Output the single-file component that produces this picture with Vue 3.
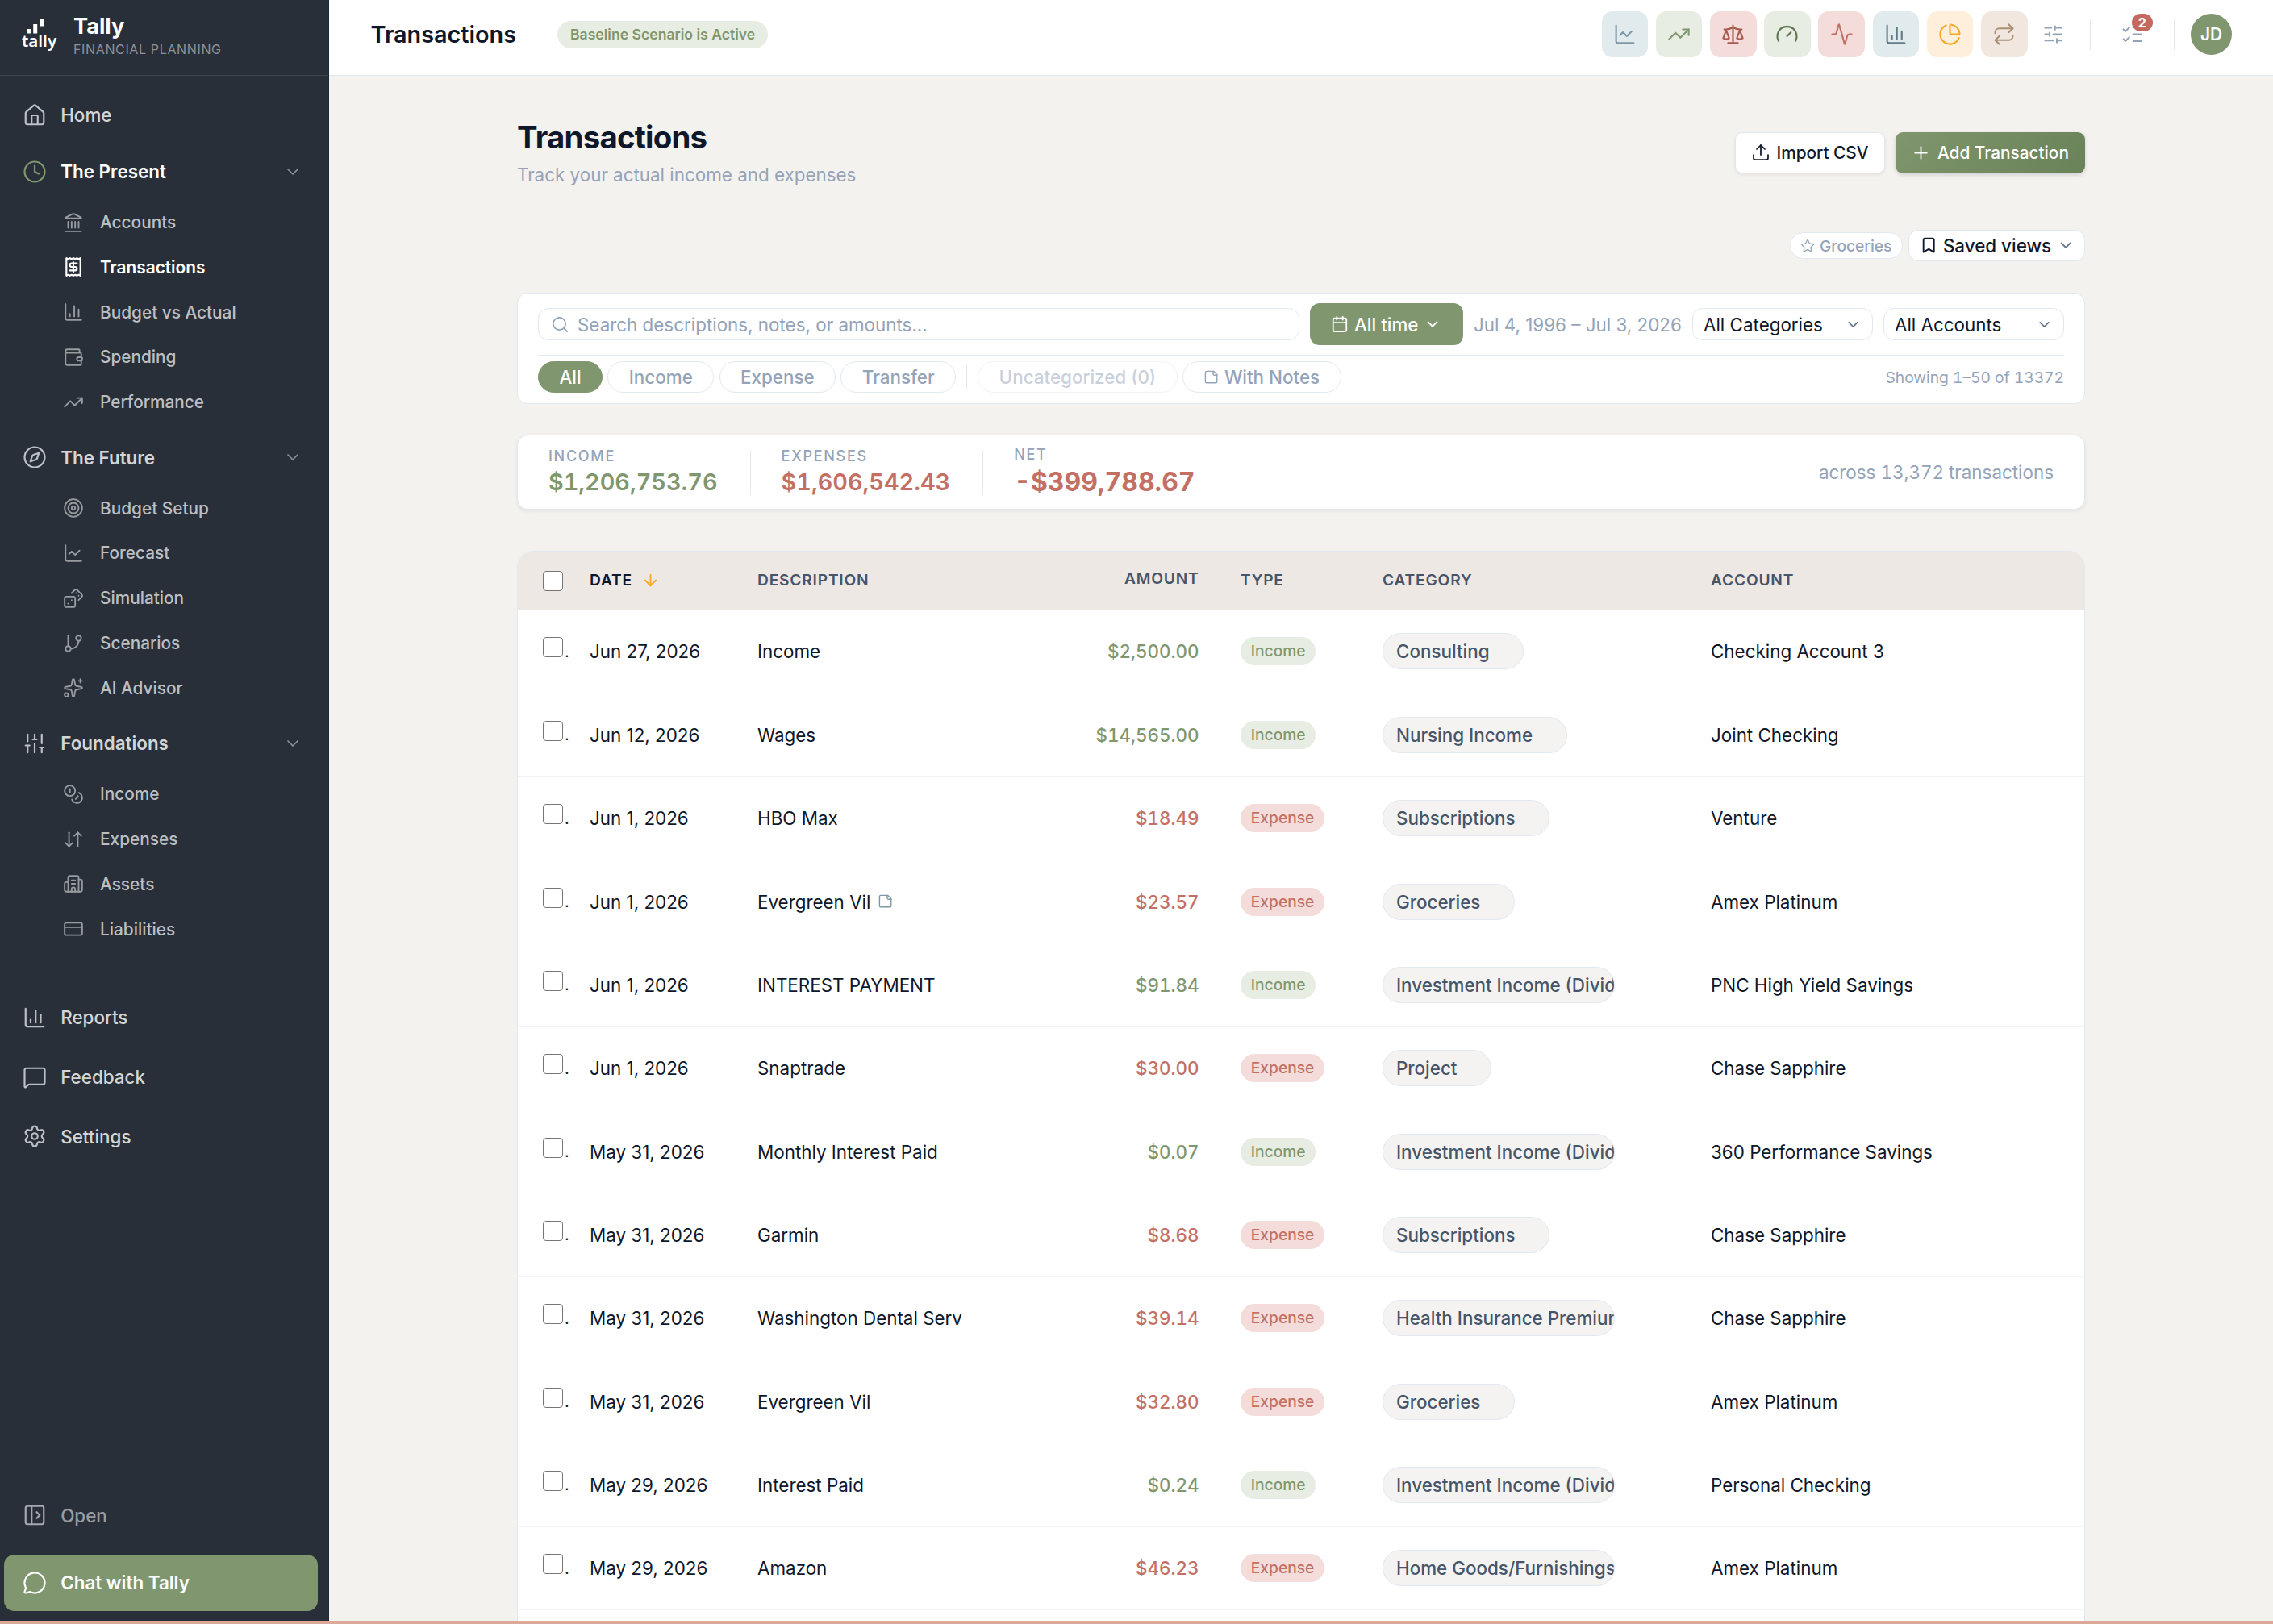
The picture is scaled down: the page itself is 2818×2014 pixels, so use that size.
<template>
  <div class="app">
    <aside class="sidebar">
      <div class="brand">
        <svg class="brand-logo" viewBox="0 0 44 42">
          <rect x="6.3" y="14" width="5" height="5.5" fill="#fff" />
          <rect x="14.2" y="8" width="5" height="11.5" fill="#fff" />
          <rect x="22.2" y="1" width="5" height="9.5" fill="#fff" />
          <text x="0" y="35.5" class="brand-word">tally</text>
        </svg>
        <div class="brand-text">
          <div class="brand-name">Tally</div>
          <div class="brand-sub">FINANCIAL PLANNING</div>
        </div>
      </div>

      <nav class="nav">
        <a class="nav-top nav-home">
          <svg class="icon" viewBox="0 0 24 24" v-html="icons.house"></svg>
          <span>Home</span>
        </a>
        <section v-for="group in navGroups" :key="group.label" class="nav-group">
          <div class="nav-top nav-heading" :class="{ current: group.current }">
            <svg class="icon" viewBox="0 0 24 24" v-html="icons[group.icon]"></svg>
            <span>{{ group.label }}</span>
            <svg class="icon nav-chevron" viewBox="0 0 24 24" v-html="icons.chevronDown"></svg>
          </div>
          <div class="nav-children">
            <a v-for="item in group.items" :key="item.label" class="nav-child" :class="{ active: item.active }">
              <svg class="icon" viewBox="0 0 24 24" v-html="icons[item.icon]"></svg>
              <span>{{ item.label }}</span>
            </a>
          </div>
        </section>
        <div class="nav-divider"></div>
        <a v-for="item in navExtra" :key="item.label" class="nav-top nav-extra">
          <svg class="icon" viewBox="0 0 24 24" v-html="icons[item.icon]"></svg>
          <span>{{ item.label }}</span>
        </a>
      </nav>

      <div class="sidebar-footer">
        <a class="nav-top nav-open">
          <svg class="icon" viewBox="0 0 24 24" v-html="icons.panelOpen"></svg>
          <span>Open</span>
        </a>
        <button class="chat-btn">
          <svg class="icon" viewBox="0 0 24 24" v-html="icons.messageCircle"></svg>
          <span>Chat with Tally</span>
        </button>
      </div>
    </aside>

    <div class="main">
      <header class="topbar">
        <div class="topbar-title">Transactions</div>
        <span class="scenario">Baseline Scenario is Active</span>
        <div class="tools">
          <button v-for="tool in tools" :key="tool.icon" class="tool" :class="tool.tone">
            <svg class="icon" viewBox="0 0 24 24" v-html="icons[tool.icon]"></svg>
          </button>
        </div>
        <svg class="icon customize" viewBox="0 0 24 24" v-html="icons.slidersH"></svg>
        <span class="bar-sep"></span>
        <div class="tasks">
          <svg class="icon" viewBox="0 0 24 24" v-html="icons.listChecks"></svg>
          <span class="tasks-badge">2</span>
        </div>
        <span class="bar-sep"></span>
        <div class="avatar">JD</div>
      </header>

      <main class="content">
        <div class="page-head">
          <div>
            <h1>Transactions</h1>
            <p>Track your actual income and expenses</p>
          </div>
          <div class="page-actions">
            <button class="btn btn-light">
              <svg class="icon" viewBox="0 0 24 24" v-html="icons.upload"></svg>Import CSV
            </button>
            <button class="btn btn-green">
              <svg class="icon" viewBox="0 0 24 24" v-html="icons.plus"></svg>Add Transaction
            </button>
          </div>
        </div>

        <div class="views">
          <span class="view-chip">
            <svg class="icon" viewBox="0 0 24 24" v-html="icons.star"></svg>Groceries
          </span>
          <button class="saved">
            <svg class="icon" viewBox="0 0 24 24" v-html="icons.bookmark"></svg>
            <span>Saved views</span>
            <svg class="icon saved-chevron" viewBox="0 0 24 24" v-html="icons.chevronDown"></svg>
          </button>
        </div>

        <div class="card filters">
          <div class="filter-row">
            <div class="search">
              <svg class="icon" viewBox="0 0 24 24" v-html="icons.search"></svg>
              <span>Search descriptions, notes, or amounts...</span>
            </div>
            <button class="range">
              <svg class="icon" viewBox="0 0 24 24" v-html="icons.calendar"></svg>
              <span>All time</span>
              <svg class="icon range-chevron" viewBox="0 0 24 24" v-html="icons.chevronDown"></svg>
            </button>
            <span class="range-text">Jul 4, 1996 – Jul 3, 2026</span>
            <div v-for="label in ['All Categories', 'All Accounts']" :key="label" class="select">
              <span>{{ label }}</span>
              <svg class="icon" viewBox="0 0 24 24" v-html="icons.chevronDown"></svg>
            </div>
          </div>
          <div class="pill-row">
            <button class="pill on">All</button>
            <button class="pill">Income</button>
            <button class="pill">Expense</button>
            <button class="pill">Transfer</button>
            <span class="pill-sep"></span>
            <button class="pill disabled">Uncategorized (0)</button>
            <button class="pill">
              <svg class="icon" viewBox="0 0 24 24" v-html="icons.note"></svg>With Notes
            </button>
            <span class="showing">Showing 1–50 of 13372</span>
          </div>
        </div>

        <div class="card totals">
          <div class="total">
            <span class="total-label">INCOME</span>
            <span class="total-value green">$1,206,753.76</span>
          </div>
          <div class="total">
            <span class="total-label">EXPENSES</span>
            <span class="total-value red">$1,606,542.43</span>
          </div>
          <div class="total">
            <span class="total-label">NET</span>
            <span class="total-value net red">-$399,788.67</span>
          </div>
          <span class="across">across 13,372 transactions</span>
        </div>

        <div class="table">
          <div class="row head">
            <span class="box head-box"></span>
            <span class="sorted">DATE<svg class="icon" viewBox="0 0 24 24" v-html="icons.arrowDown"></svg></span>
            <span>DESCRIPTION</span>
            <span class="amount">AMOUNT</span>
            <span class="col-type">TYPE</span>
            <span>CATEGORY</span>
            <span>ACCOUNT</span>
          </div>
          <div v-for="(t, i) in transactions" :key="i" class="row">
            <span class="check"><span class="box"></span><span class="dot">.</span></span>
            <span>{{ t.date }}</span>
            <span class="desc">
              {{ t.description }}<svg v-if="t.note" class="icon" viewBox="0 0 24 24" v-html="icons.note"></svg>
            </span>
            <span class="amount" :class="t.type === 'Income' ? 'green' : 'red'">{{ t.amount }}</span>
            <span class="col-type"><span class="type" :class="t.type.toLowerCase()">{{ t.type }}</span></span>
            <span class="col-cat"><span class="category">{{ t.category }}</span></span>
            <span>{{ t.account }}</span>
          </div>
        </div>
      </main>
    </div>

    <div class="bottom-strip"></div>
  </div>
</template>

<script setup>
const p = (...ds) => ds.map((d) => `<path d="${d}"/>`).join('')
const c = (x, y, r) => `<circle cx="${x}" cy="${y}" r="${r}"/>`
const r = (x, y, w, h) => `<rect x="${x}" y="${y}" width="${w}" height="${h}" rx="2"/>`

// 24x24 stroke icons
const icons = {
  house: p('M15 21v-8a1 1 0 0 0-1-1h-4a1 1 0 0 0-1 1v8', 'M3 10a2 2 0 0 1 .709-1.528l7-5.999a2 2 0 0 1 2.582 0l7 5.999A2 2 0 0 1 21 10v9a2 2 0 0 1-2 2H5a2 2 0 0 1-2-2z'),
  clock: c(12, 12, 10) + p('M12 6v6l4 2'),
  compass: c(12, 12, 10) + p('m16.24 7.76-1.804 5.411a2 2 0 0 1-1.265 1.265L7.76 16.24l1.804-5.411a2 2 0 0 1 1.265-1.265z'),
  slidersV: p('M10 8h4', 'M12 21v-9', 'M12 8V3', 'M17 16h4', 'M19 12V3', 'M19 21v-5', 'M3 14h4', 'M5 10V3', 'M5 21v-7'),
  slidersH: p('M10 5H3', 'M12 19H3', 'M14 3v4', 'M16 17v4', 'M21 12h-9', 'M21 19h-5', 'M21 5h-7', 'M8 10v4', 'M8 12H3'),
  chevronDown: p('m6 9 6 6 6-6'),
  landmark: p('M10 18v-7', 'M11.12 2.198a2 2 0 0 1 1.76.006l7.866 3.847c.476.233.31.949-.22.949H3.474c-.53 0-.695-.716-.22-.949z', 'M14 18v-7', 'M18 18v-7', 'M3 22h18', 'M6 18v-7'),
  receipt: p('M4 2v20l2-1 2 1 2-1 2 1 2-1 2 1 2-1 2 1V2l-2 1-2-1-2 1-2-1-2 1-2-1-2 1Z', 'M16 8h-6a2 2 0 1 0 0 4h4a2 2 0 1 1 0 4H8', 'M12 17.5v-11'),
  chartColumn: p('M3 3v16a2 2 0 0 0 2 2h16', 'M18 17V9', 'M13 17V5', 'M8 17v-3'),
  chartLine: p('M3 3v16a2 2 0 0 0 2 2h16', 'm19 9-5 5-4-4-3 3'),
  wallet: p('M19 7V4a1 1 0 0 0-1-1H5a2 2 0 0 0 0 4h15a1 1 0 0 1 1 1v4h-3a2 2 0 0 0 0 4h3a1 1 0 0 0 1-1v-2a1 1 0 0 0-1-1', 'M3 5v14a2 2 0 0 0 2 2h15a1 1 0 0 0 1-1v-4'),
  trendingUp: p('m22 7-8.5 8.5-5-5L2 17', 'M16 7h6v6'),
  target: c(12, 12, 10) + c(12, 12, 6) + c(12, 12, 2),
  dices: r(2, 10, 12, 12) + p('m17.92 14 3.5-3.5a2.24 2.24 0 0 0 0-3l-5-4.92a2.24 2.24 0 0 0-3 0L10 6', 'M6 18h.01', 'M10 14h.01', 'M15 6h.01', 'M18 9h.01'),
  branch: p('M6 3v12') + c(18, 6, 3) + c(6, 18, 3) + p('M18 9a9 9 0 0 1-9 9'),
  sparkles: p('M11.017 2.814a1 1 0 0 1 1.966 0l1.051 5.558a2 2 0 0 0 1.594 1.594l5.558 1.051a1 1 0 0 1 0 1.966l-5.558 1.051a2 2 0 0 0-1.594 1.594l-1.051 5.558a1 1 0 0 1-1.966 0l-1.051-5.558a2 2 0 0 0-1.594-1.594l-5.558-1.051a1 1 0 0 1 0-1.966l5.558-1.051a2 2 0 0 0 1.594-1.594z', 'M20 2v4', 'M22 4h-4') + c(4, 20, 2),
  coins: c(8, 8, 6) + p('M18.09 10.37A6 6 0 1 1 10.34 18', 'M7 6h1v4', 'm16.71 13.88.7.71-2.82 2.82'),
  arrowDownUp: p('m3 16 4 4 4-4', 'M7 20V4', 'm21 8-4-4-4 4', 'M17 4v16'),
  building: p('M10 12h4', 'M10 8h4', 'M14 21v-3a2 2 0 0 0-4 0v3', 'M6 10H4a2 2 0 0 0-2 2v7a2 2 0 0 0 2 2h16a2 2 0 0 0 2-2V9a2 2 0 0 0-2-2h-2', 'M6 21V5a2 2 0 0 1 2-2h8a2 2 0 0 1 2 2v16'),
  card: r(2, 5, 20, 14) + p('M2 10h20'),
  message: p('M22 17a2 2 0 0 1-2 2H6.828a2 2 0 0 0-1.414.586l-2.202 2.202A.71.71 0 0 1 2 21.286V5a2 2 0 0 1 2-2h16a2 2 0 0 1 2 2z'),
  messageCircle: p('M2.992 16.342a2 2 0 0 1 .094 1.167l-1.065 3.29a1 1 0 0 0 1.236 1.168l3.413-.998a2 2 0 0 1 1.099.092 10 10 0 1 0-4.777-4.719'),
  settings: p('M9.671 4.136a2.34 2.34 0 0 1 4.659 0 2.34 2.34 0 0 0 3.319 1.915 2.34 2.34 0 0 1 2.33 4.033 2.34 2.34 0 0 0 0 3.831 2.34 2.34 0 0 1-2.33 4.033 2.34 2.34 0 0 0-3.319 1.915 2.34 2.34 0 0 1-4.659 0 2.34 2.34 0 0 0-3.32-1.915 2.34 2.34 0 0 1-2.33-4.033 2.34 2.34 0 0 0 0-3.831A2.34 2.34 0 0 1 6.35 6.051a2.34 2.34 0 0 0 3.319-1.915') + c(12, 12, 3),
  panelOpen: r(3, 3, 18, 18) + p('M9 3v18', 'm14 9 3 3-3 3'),
  scale: p('m16 16 3-8 3 8c-.87.65-1.92 1-3 1s-2.13-.35-3-1Z', 'm2 16 3-8 3 8c-.87.65-1.92 1-3 1s-2.13-.35-3-1Z', 'M7 21h10', 'M12 3v18', 'M3 7h2c2 0 5-1 7-2 2 1 5 2 7 2h2'),
  gauge: p('m12 14 4-4', 'M3.34 19a10 10 0 1 1 17.32 0'),
  activity: p('M22 12h-2.48a2 2 0 0 0-1.93 1.46l-2.35 8.36a.25.25 0 0 1-.48 0L9.24 2.18a.25.25 0 0 0-.48 0l-2.35 8.36A2 2 0 0 1 4.49 12H2'),
  pie: p('M21 12c.552 0 1.005-.449.95-.998a10 10 0 0 0-8.953-8.951c-.55-.055-.998.398-.998.95v8a1 1 0 0 0 1 1z', 'M21.21 15.89A10 10 0 1 1 8 2.83'),
  repeat: p('m17 2 4 4-4 4', 'M3 11v-1a4 4 0 0 1 4-4h14', 'm7 22-4-4 4-4', 'M21 13v1a4 4 0 0 1-4 4H3'),
  listChecks: p('M13 5h8', 'M13 12h8', 'M13 19h8', 'm3 17 2 2 4-4', 'm3 7 2 2 4-4'),
  upload: p('M12 3v12', 'm17 8-5-5-5 5', 'M21 15v4a2 2 0 0 1-2 2H5a2 2 0 0 1-2-2v-4'),
  plus: p('M5 12h14', 'M12 5v14'),
  star: p('M11.525 2.295a.53.53 0 0 1 .95 0l2.31 4.679a2.123 2.123 0 0 0 1.595 1.16l5.166.756a.53.53 0 0 1 .294.904l-3.736 3.638a2.123 2.123 0 0 0-.611 1.878l.882 5.14a.53.53 0 0 1-.771.56l-4.618-2.428a2.122 2.122 0 0 0-1.973 0L6.396 21.01a.53.53 0 0 1-.77-.56l.881-5.139a2.122 2.122 0 0 0-.611-1.879L2.16 9.795a.53.53 0 0 1 .294-.906l5.165-.755a2.122 2.122 0 0 0 1.597-1.16z'),
  bookmark: p('m19 21-7-4-7 4V5a2 2 0 0 1 2-2h10a2 2 0 0 1 2 2z'),
  search: c(11, 11, 8) + p('m21 21-4.34-4.34'),
  calendar: p('M8 2v4', 'M16 2v4', 'M3 10h18') + r(3, 4, 18, 18),
  note: p('M16 3H5a2 2 0 0 0-2 2v14a2 2 0 0 0 2 2h14a2 2 0 0 0 2-2V8Z', 'M15 3v4a2 2 0 0 0 2 2h4'),
  arrowDown: p('M12 5v14', 'm19 12-7 7-7-7')
}

const navGroups = [
  {
    label: 'The Present',
    icon: 'clock',
    current: true,
    items: [
      { label: 'Accounts', icon: 'landmark' },
      { label: 'Transactions', icon: 'receipt', active: true },
      { label: 'Budget vs Actual', icon: 'chartColumn' },
      { label: 'Spending', icon: 'wallet' },
      { label: 'Performance', icon: 'trendingUp' }
    ]
  },
  {
    label: 'The Future',
    icon: 'compass',
    items: [
      { label: 'Budget Setup', icon: 'target' },
      { label: 'Forecast', icon: 'chartLine' },
      { label: 'Simulation', icon: 'dices' },
      { label: 'Scenarios', icon: 'branch' },
      { label: 'AI Advisor', icon: 'sparkles' }
    ]
  },
  {
    label: 'Foundations',
    icon: 'slidersV',
    items: [
      { label: 'Income', icon: 'coins' },
      { label: 'Expenses', icon: 'arrowDownUp' },
      { label: 'Assets', icon: 'building' },
      { label: 'Liabilities', icon: 'card' }
    ]
  }
]

const navExtra = [
  { label: 'Reports', icon: 'chartColumn' },
  { label: 'Feedback', icon: 'message' },
  { label: 'Settings', icon: 'settings' }
]

const tools = [
  { icon: 'chartLine', tone: 'blue' },
  { icon: 'trendingUp', tone: 'sage' },
  { icon: 'scale', tone: 'brick' },
  { icon: 'gauge', tone: 'moss' },
  { icon: 'activity', tone: 'rose' },
  { icon: 'chartColumn', tone: 'slate' },
  { icon: 'pie', tone: 'amber' },
  { icon: 'repeat', tone: 'sand' }
]

const tx = (date, description, amount, type, category, account, note = false) => ({
  date, description, amount, type, category, account, note
})

const transactions = [
  tx('Jun 27, 2026', 'Income', '$2,500.00', 'Income', 'Consulting', 'Checking Account 3'),
  tx('Jun 12, 2026', 'Wages', '$14,565.00', 'Income', 'Nursing Income', 'Joint Checking'),
  tx('Jun 1, 2026', 'HBO Max', '$18.49', 'Expense', 'Subscriptions', 'Venture'),
  tx('Jun 1, 2026', 'Evergreen Vil', '$23.57', 'Expense', 'Groceries', 'Amex Platinum', true),
  tx('Jun 1, 2026', 'INTEREST PAYMENT', '$91.84', 'Income', 'Investment Income (Dividends)', 'PNC High Yield Savings'),
  tx('Jun 1, 2026', 'Snaptrade', '$30.00', 'Expense', 'Project', 'Chase Sapphire'),
  tx('May 31, 2026', 'Monthly Interest Paid', '$0.07', 'Income', 'Investment Income (Dividends)', '360 Performance Savings'),
  tx('May 31, 2026', 'Garmin', '$8.68', 'Expense', 'Subscriptions', 'Chase Sapphire'),
  tx('May 31, 2026', 'Washington Dental Serv', '$39.14', 'Expense', 'Health Insurance Premiums', 'Chase Sapphire'),
  tx('May 31, 2026', 'Evergreen Vil', '$32.80', 'Expense', 'Groceries', 'Amex Platinum'),
  tx('May 29, 2026', 'Interest Paid', '$0.24', 'Income', 'Investment Income (Dividends)', 'Personal Checking'),
  tx('May 29, 2026', 'Amazon', '$46.23', 'Expense', 'Home Goods/Furnishings', 'Amex Platinum')
]
</script>

<style>
body {
  margin: 0;
  overflow: hidden;
}
</style>

<style scoped>
.app {
  position: relative;
  display: flex;
  width: 100vw;
  height: 100vh;
  overflow: hidden;
  background: #f4f2ee;
  color: #0f172a;
  font-family: Inter, "Liberation Sans", sans-serif;
  font-size: 22.4px;
}

.app *,
.app *::before {
  box-sizing: border-box;
}

button {
  font: inherit;
  border: 0;
  margin: 0;
  padding: 0;
  background: none;
  color: inherit;
}

.icon {
  display: block;
  flex: none;
  fill: none;
  stroke: currentColor;
  stroke-width: 1.75;
  stroke-linecap: round;
  stroke-linejoin: round;
}

.green {
  color: #7f966e;
}

.red {
  color: #c46f64;
}

/* Sidebar */
.sidebar {
  display: flex;
  flex-direction: column;
  flex: none;
  width: 408px;
  background: #282f39;
  border-right: 1px solid #1b2a36;
}

.brand {
  display: flex;
  height: 94px;
  padding-left: 27px;
  border-bottom: 1px solid rgba(255, 255, 255, 0.11);
}

.brand-logo {
  width: 44px;
  height: 42px;
  margin-top: 22px;
}

.brand-word {
  font-family: "Noto Sans", sans-serif;
  font-size: 20.5px;
  font-weight: 600;
  fill: #fff;
}

.brand-text {
  margin: 15.5px 0 0 20px;
}

.brand-name {
  color: #fff;
  font-size: 27.2px;
  font-weight: 700;
  line-height: 34px;
}

.brand-sub {
  margin-top: 1px;
  color: #8c9197;
  font-size: 16px;
  line-height: 21px;
  letter-spacing: 0.64px;
}

.nav {
  flex: 1;
  padding-top: 16.6px;
}

.nav-top {
  display: flex;
  align-items: center;
  height: 64.8px;
  padding-left: 28.4px;
  gap: 16.8px;
  color: #d3d5d7;
  font-weight: 500;
}

.nav-top .icon {
  width: 30px;
  height: 30px;
  color: #bcbfc3;
}

.nav-home {
  margin-bottom: 4.8px;
}

.nav-heading {
  font-weight: 600;
}

.nav-heading span {
  flex: 1;
}

.nav-heading.current {
  color: #fff;
}

.nav-heading.current .icon {
  color: #7f966e;
}

.nav-heading .nav-chevron,
.nav-heading.current .nav-chevron {
  width: 24px;
  height: 24px;
  margin-right: 32px;
  color: #8d9298;
}

.nav-children {
  display: flex;
  flex-direction: column;
  gap: 1.8px;
  margin: 3.6px 0 9px 38px;
  border-left: 1px solid rgba(255, 255, 255, 0.14);
}

.nav-child {
  display: flex;
  align-items: center;
  height: 54px;
  padding-left: 39px;
  gap: 20px;
  color: #bcbfc2;
  font-size: 20.8px;
  font-weight: 500;
}

.nav-child .icon {
  width: 26px;
  height: 26px;
  color: #989ca1;
}

.nav-child.active {
  color: #fff;
  font-weight: 600;
}

.nav-child.active .icon {
  color: #fff;
  stroke-width: 2;
}

.nav-divider {
  height: 1px;
  margin: 26px 26px 23.4px 18px;
  background: rgba(255, 255, 255, 0.11);
}

.nav-extra {
  margin-bottom: 8.9px;
}

.sidebar-footer {
  height: 184px;
  padding-top: 16px;
  border-top: 1px solid rgba(255, 255, 255, 0.11);
}

.nav-open {
  color: #999da1;
}

.nav-open .icon {
  color: #a5a8ad;
}

.chat-btn {
  display: flex;
  align-items: center;
  width: 389px;
  height: 70px;
  margin: 16px 0 0 5px;
  padding-left: 23.4px;
  gap: 16.8px;
  border-radius: 13px;
  background: #7f966e;
  color: #fff;
  font-weight: 600;
}

.chat-btn .icon {
  width: 30px;
  height: 30px;
}

/* Top bar */
.main {
  flex: 1;
  min-width: 0;
}

.topbar {
  display: flex;
  align-items: center;
  height: 94px;
  padding: 0 51px 8px 51.5px;
  background: #fff;
  border-bottom: 1px solid #e2e8f0;
}

.topbar-title {
  width: 231.5px;
  font-size: 28.8px;
  font-weight: 600;
}

.scenario {
  height: 34px;
  padding: 0 16px;
  border-radius: 17px;
  background: #e7ede2;
  color: #7f966e;
  font-size: 17.6px;
  font-weight: 600;
  line-height: 34px;
}

.tools {
  display: flex;
  gap: 9.6px;
  margin-left: auto;
}

.tool {
  display: grid;
  place-items: center;
  width: 57.6px;
  height: 57.6px;
  border-radius: 13px;
}

.tool .icon {
  width: 29px;
  height: 29px;
}

.blue {
  background: #e1eaed;
  color: #7c98a6;
}

.sage {
  background: #e7ede2;
  color: #7f966e;
}

.brick {
  background: #f4dcda;
  color: #a85a50;
}

.moss {
  background: #e7ede2;
  color: #5f7350;
}

.rose {
  background: #f4dcda;
  color: #c46f64;
}

.slate {
  background: #e1eaed;
  color: #617c85;
}

.amber {
  background: #feefdd;
  color: #f9a825;
}

.sand {
  background: #f1e7de;
  color: #a98f74;
}

.customize {
  width: 27px;
  height: 27px;
  margin: 0 32px 0 18px;
  color: #94a3b8;
}

.bar-sep {
  width: 1px;
  height: 39px;
  background: #e2e8f0;
}

.tasks {
  position: relative;
  margin: 0 37.5px 0 37px;
  color: #94a3b8;
}

.tasks .icon {
  width: 29px;
  height: 29px;
}

.tasks-badge {
  position: absolute;
  top: -11px;
  left: 14px;
  width: 26.5px;
  height: 22px;
  border-radius: 11px;
  background: #c4695e;
  color: #fff;
  font-size: 16px;
  font-weight: 700;
  line-height: 22px;
  text-align: center;
}

.avatar {
  width: 51px;
  height: 51px;
  margin-left: 20px;
  border-radius: 50%;
  background: #7f966e;
  color: #fff;
  font-size: 20.8px;
  font-weight: 600;
  line-height: 51px;
  text-align: center;
}

/* Page */
.content {
  width: 1944px;
  margin: 0 auto;
  padding-top: 49px;
}

.page-head {
  display: flex;
  justify-content: space-between;
  height: 142px;
}

h1 {
  margin: 0;
  font-size: 38.4px;
  font-weight: 700;
  line-height: 54px;
  letter-spacing: -0.77px;
}

.page-head p {
  margin: 4px 0 0;
  color: #94a3b8;
  line-height: 32px;
}

.page-actions {
  display: flex;
  gap: 13.5px;
  padding-top: 20.5px;
}

.btn {
  display: flex;
  align-items: center;
  height: 51px;
  border-radius: 9px;
  font-size: 20.8px;
  font-weight: 500;
  white-space: nowrap;
}

.btn .icon {
  width: 25px;
  height: 25px;
}

.btn-light {
  width: 186px;
  padding-left: 19.5px;
  gap: 7.5px;
  border: 1px solid #e2e8f0;
  background: #fff;
  box-shadow: 0 2px 4px rgba(15, 23, 42, 0.07);
}

.btn-light .icon {
  width: 24px;
  height: 24px;
}

.btn-green {
  width: 235px;
  padding-left: 19px;
  gap: 8px;
  background: linear-gradient(135deg, #7f966e, #6a8257);
  box-shadow: 0 2px 5px rgba(15, 23, 42, 0.16);
  color: #fff;
}

.views {
  display: flex;
  align-items: center;
  justify-content: flex-end;
  gap: 7px;
  height: 39px;
}

.view-chip {
  display: flex;
  align-items: center;
  width: 140px;
  height: 33px;
  padding-left: 12px;
  gap: 6px;
  border: 1px solid #e2e8f0;
  border-radius: 17px;
  background: #fff;
  color: #94a3b8;
  font-size: 19.2px;
  font-weight: 500;
}

.view-chip .icon {
  width: 18px;
  height: 18px;
}

.saved {
  display: flex;
  align-items: center;
  width: 219px;
  height: 39px;
  padding-left: 12.5px;
  gap: 7px;
  border: 1px solid #e2e8f0;
  border-radius: 12px;
  background: #fff;
  font-weight: 500;
}

.saved .icon {
  width: 22.4px;
  height: 22.4px;
  stroke-width: 2;
}

.saved .saved-chevron {
  color: #64748b;
}

.card {
  border: 1px solid #e2e8f0;
  border-radius: 13px;
  background: #fff;
}

.filters {
  height: 138px;
  margin-top: 39px;
  padding: 12px 25px 0;
}

.filter-row {
  display: flex;
  align-items: center;
  gap: 13px;
  height: 52px;
}

.search {
  display: flex;
  align-items: center;
  flex: 1;
  height: 40px;
  padding-left: 15px;
  gap: 10px;
  border: 1px solid #e2e8f0;
  border-radius: 13px;
  color: #94a3b8;
}

.search .icon {
  width: 23px;
  height: 23px;
}

.range {
  display: flex;
  align-items: center;
  width: 190px;
  height: 52px;
  padding-left: 26px;
  gap: 7px;
  border-radius: 12px;
  background: #7f966e;
  color: #fff;
  font-weight: 500;
}

.range .icon {
  width: 22px;
  height: 22px;
  stroke-width: 2;
}

.range-text {
  width: 258px;
  color: #94a3b8;
  white-space: nowrap;
}

.select {
  display: flex;
  align-items: center;
  justify-content: space-between;
  width: 224px;
  height: 40px;
  padding: 0 13px 0 13px;
  border: 1px solid #e2e8f0;
  border-radius: 13px;
}

.select .icon {
  width: 21px;
  height: 21px;
  color: #64748b;
  stroke-width: 2;
}

.pill-row {
  display: flex;
  align-items: center;
  margin-top: 12px;
  padding-top: 7px;
  border-top: 1px solid #e2e8f0;
}

.pill {
  display: flex;
  align-items: center;
  gap: 6.4px;
  height: 39px;
  margin-right: 6.4px;
  padding: 0 25.4px;
  border: 1px solid #e2e8f0;
  border-radius: 20px;
  color: #94a3b8;
  font-weight: 500;
}

.pill.on {
  border-color: #7f966e;
  background: #7f966e;
  color: #fff;
}

.pill.disabled {
  opacity: 0.5;
}

.pill .icon {
  width: 19.2px;
  height: 19.2px;
}

.pill-sep {
  width: 1.6px;
  height: 29px;
  margin: 0 12.8px 0 6.4px;
  background: #e2e8f0;
}

.showing {
  margin-left: auto;
  color: #94a3b8;
  font-size: 19.2px;
  font-variant-numeric: tabular-nums;
}

.totals {
  display: flex;
  align-items: center;
  height: 93px;
  margin-top: 38px;
  padding: 0 38px;
  box-shadow: 0 2px 5px rgba(15, 23, 42, 0.07);
  font-variant-numeric: tabular-nums;
}

.total {
  display: flex;
  flex-direction: column;
  justify-content: center;
  height: 56px;
}

.total + .total {
  margin-left: 40px;
  padding-left: 38px;
  border-left: 1px solid #e2e8f0;
}

.total-label {
  color: #94a3b8;
  font-size: 18px;
  font-weight: 500;
  line-height: 24px;
  letter-spacing: 1.7px;
}

.total-value {
  font-size: 28.8px;
  font-weight: 600;
  line-height: 39px;
}

.total-value.net {
  font-size: 32px;
  font-weight: 700;
  line-height: 43px;
}

.across {
  margin-left: auto;
  color: #94a3b8;
}

/* Table */
.table {
  min-height: 1400px;
  margin-top: 51px;
  overflow: hidden;
  border: 1px solid #e2e8f0;
  border-radius: 20px 20px 0 0;
  background: #fff;
}

.row {
  display: grid;
  grid-template-columns: 58px 208px 361px 186.5px 227.5px 407px 1fr;
  align-items: center;
  height: 103.35px;
  padding-left: 31px;
  border-bottom: 1px solid #f1f5f9;
  white-space: nowrap;
}

.head {
  height: 72.8px;
  padding-bottom: 1px;
  background: #eee8e4;
  border-color: #e2e8f0;
  color: #475569;
  font-size: 19.2px;
  font-weight: 600;
  letter-spacing: 0.8px;
}

.head-box {
  position: relative;
  top: 1px;
}

.sorted {
  display: flex;
  align-items: center;
  gap: 11px;
  color: #0f172a;
}

.sorted .icon {
  width: 23px;
  height: 23px;
  color: #f9a825;
  stroke-width: 2;
}

.amount {
  text-align: right;
}

.head .amount {
  padding-bottom: 4px;
}

.row:not(.head) .amount {
  font-weight: 500;
  font-variant-numeric: tabular-nums;
}

.col-type {
  padding-left: 51.5px;
}

.check {
  display: flex;
  align-items: center;
}

.box {
  display: block;
  width: 25px;
  height: 25px;
  border: 1.5px solid #767676;
  border-radius: 4px;
  background: #fff;
}

.check .box {
  margin-top: -10px;
}

.dot {
  margin-left: 2px;
  font-size: 20px;
}

.desc {
  display: flex;
  align-items: center;
  gap: 9px;
}

.desc .icon {
  width: 19.2px;
  height: 19.2px;
  color: #7c98a6;
}

.type {
  display: inline-block;
  height: 35px;
  padding: 0 12.8px;
  border-radius: 18px;
  font-size: 19.2px;
  font-weight: 500;
  line-height: 35px;
}

.type.income {
  background: #e7ede2;
  color: #7f966e;
}

.type.expense {
  background: #f4dcda;
  color: #c46f64;
}

.category {
  display: block;
  width: fit-content;
  max-width: 288px;
  height: 45px;
  padding: 0 41.6px 0 16px;
  overflow: hidden;
  border: 1px solid #e2e8f0;
  border-radius: 23px;
  background: #f4f3f2;
  color: #475569;
  font-weight: 500;
  line-height: 43px;
}

.bottom-strip {
  position: absolute;
  left: 0;
  right: 0;
  bottom: 0;
  height: 4px;
  background: #dca898;
}
</style>
